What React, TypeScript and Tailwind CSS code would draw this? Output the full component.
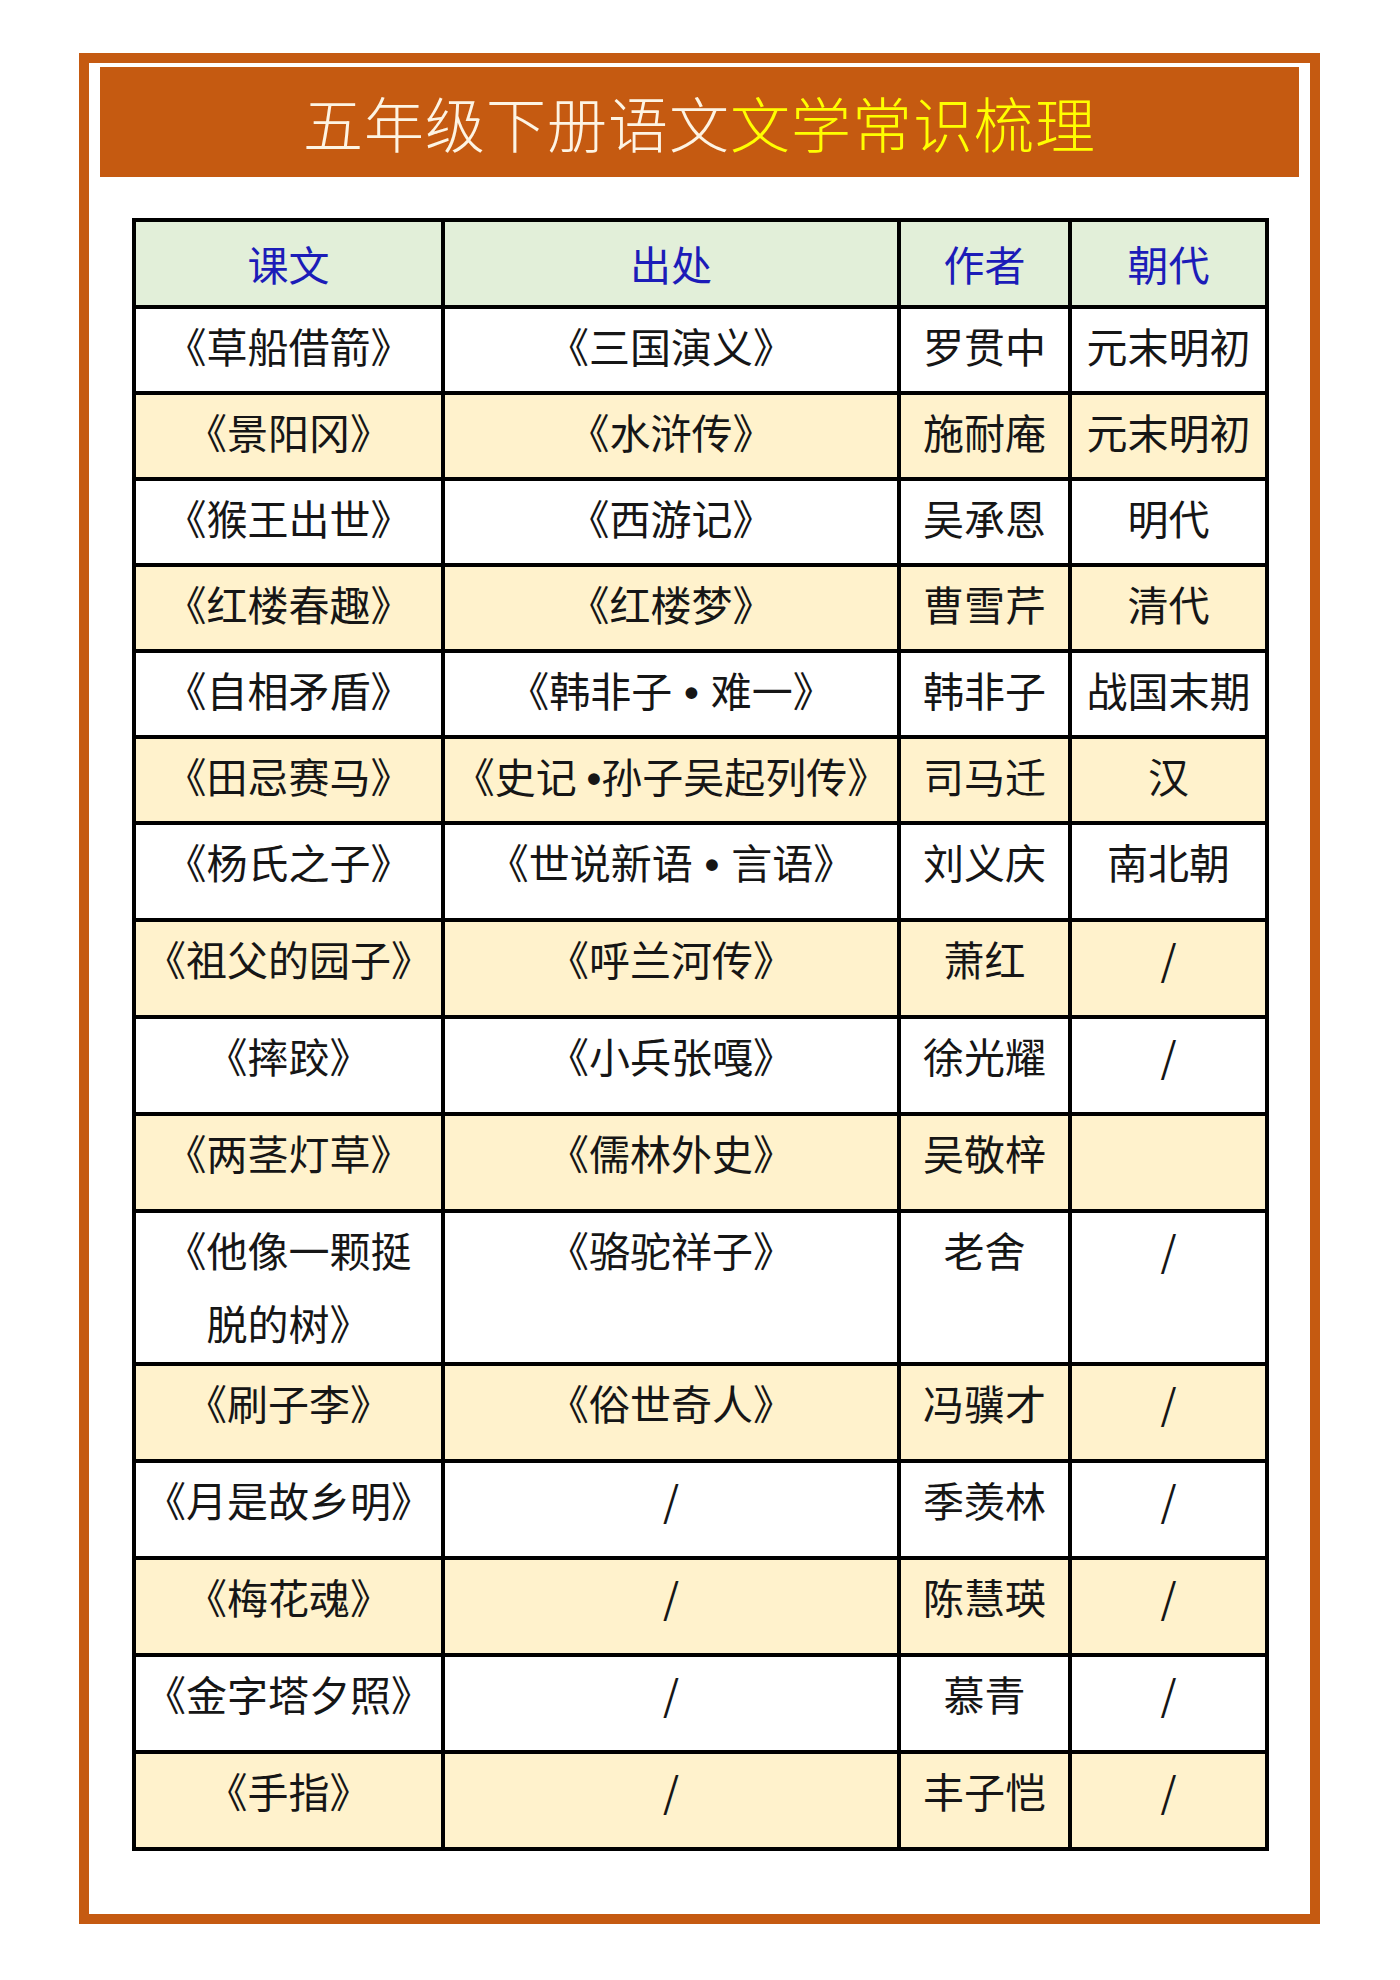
const FONT = "font-['Noto_Sans_CJK_SC','Noto_Sans_CJK_JP',sans-serif]"

type Row = { title: React.ReactNode; source: string; author: string; era: string; h: string }

const ROWS: Row[] = [
  { title: '《草船借箭》', source: '《三国演义》', author: '罗贯中', era: '元末明初', h: 'h-[86px]' },
  { title: '《景阳冈》', source: '《水浒传》', author: '施耐庵', era: '元末明初', h: 'h-[86px]' },
  { title: '《猴王出世》', source: '《西游记》', author: '吴承恩', era: '明代', h: 'h-[86px]' },
  { title: '《红楼春趣》', source: '《红楼梦》', author: '曹雪芹', era: '清代', h: 'h-[86px]' },
  { title: '《自相矛盾》', source: '《韩非子 • 难一》', author: '韩非子', era: '战国末期', h: 'h-[86px]' },
  { title: '《田忌赛马》', source: '《史记 •孙子吴起列传》', author: '司马迁', era: '汉', h: 'h-[86px]' },
  { title: '《杨氏之子》', source: '《世说新语 • 言语》', author: '刘义庆', era: '南北朝', h: 'h-[97px]' },
  { title: '《祖父的园子》', source: '《呼兰河传》', author: '萧红', era: '/', h: 'h-[97px]' },
  { title: '《摔跤》', source: '《小兵张嘎》', author: '徐光耀', era: '/', h: 'h-[97px]' },
  { title: '《两茎灯草》', source: '《儒林外史》', author: '吴敬梓', era: '', h: 'h-[97px]' },
  {
    title: (
      <>
        《他像一颗挺
        <br />
        脱的树》
      </>
    ),
    source: '《骆驼祥子》',
    author: '老舍',
    era: '/',
    h: 'h-[153px]',
  },
  { title: '《刷子李》', source: '《俗世奇人》', author: '冯骥才', era: '/', h: 'h-[97px]' },
  { title: '《月是故乡明》', source: '/', author: '季羡林', era: '/', h: 'h-[97px]' },
  { title: '《梅花魂》', source: '/', author: '陈慧瑛', era: '/', h: 'h-[97px]' },
  { title: '《金字塔夕照》', source: '/', author: '慕青', era: '/', h: 'h-[97px]' },
  { title: '《手指》', source: '/', author: '丰子恺', era: '/', h: 'h-[97px]' },
]

// the bullet in the source column is drawn from a latin font so it stays narrow
function withDot(text: string) {
  if (!text.includes('•')) return text
  const spaced = text.includes(' • ')
  const [a, b] = text.split(spaced ? ' • ' : ' •')
  return (
    <>
      {a}
      <span className={`font-['Liberation_Sans',sans-serif] font-bold ${spaced ? 'px-[12px]' : 'pl-[10px]'}`}>•</span>
      {b}
    </>
  )
}

function Cell({ children }: { children: React.ReactNode }) {
  return (
    <td className="border-[4px] border-black p-0 align-top text-center leading-[73px] whitespace-nowrap">
      {children}
    </td>
  )
}

export default function App() {
  return (
    <div className={`w-[1400px] h-[1980px] bg-white pt-[53px] pl-[79px] ${FONT}`}>
      {/* orange frame */}
      <div className="w-[1241px] h-[1871px] border-[10px] border-[#c55a11] bg-white flex flex-col px-[11px] pt-[4px]">
        {/* title band */}
        <div className="h-[110px] bg-[#c55a11] flex items-center justify-center shrink-0">
          <h1 className="text-[60px] font-light leading-none tracking-[1px]">
            <span className="text-[#fdf4e4]">五年级下册语文</span>
            <span className="text-[#ffff00]">文学常识梳理</span>
          </h1>
        </div>

        <div className="pt-[41px] pl-[32px]">
          <table className="table-fixed border-collapse w-[1133px] text-[41px] font-normal text-[#161616]">
            <colgroup>
              <col className="w-[309px]" />
              <col className="w-[456px]" />
              <col className="w-[171px]" />
              <col className="w-[197px]" />
            </colgroup>
            <thead>
              <tr className="h-[87px] bg-[#e2efd9] text-[#1c1cb8]">
                {['课文', '出处', '作者', '朝代'].map(t => (
                  <th key={t} className="border-[4px] border-black p-0 font-normal align-middle text-center">
                    {t}
                  </th>
                ))}
              </tr>
            </thead>
            <tbody>
              {ROWS.map((r, i) => (
                <tr key={i} className={`${r.h} ${i % 2 === 1 ? 'bg-[#fff2cc]' : 'bg-white'}`}>
                  <Cell>{r.title}</Cell>
                  <Cell>{withDot(r.source)}</Cell>
                  <Cell>{r.author}</Cell>
                  <Cell>{r.era}</Cell>
                </tr>
              ))}
            </tbody>
          </table>
        </div>
      </div>
    </div>
  )
}
